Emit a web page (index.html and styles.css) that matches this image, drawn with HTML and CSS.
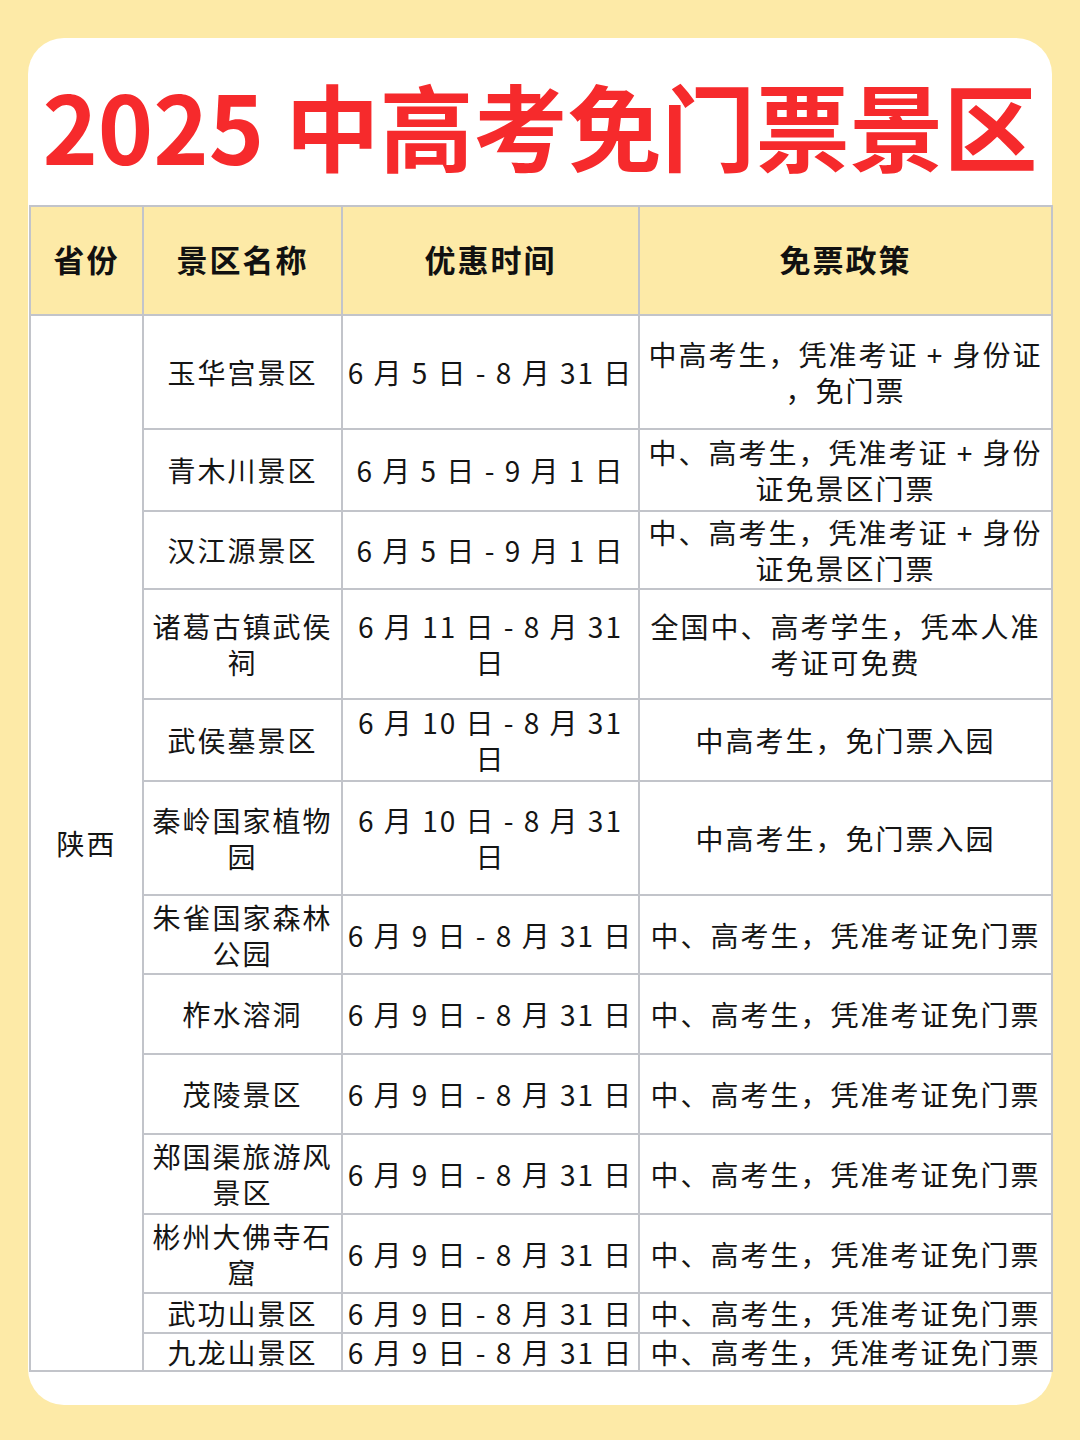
FILE: index.html
```html
<!DOCTYPE html>
<html lang="zh-CN">
<head>
<meta charset="utf-8">
<title>2025 中高考免门票景区</title>
<link rel="stylesheet" href="styles.css">
</head>
<body>
<div class="card">
  <h1 class="title">2025 中高考免门票景区</h1>
  <table class="tbl">
    <colgroup><col class="c1"><col class="c2"><col class="c3"><col class="c4"></colgroup>
    <thead>
      <tr class="r-head"><th>省份</th><th>景区名称</th><th>优惠时间</th><th>免票政策</th></tr>
    </thead>
    <tbody>
      <tr class="h114"><td rowspan="13" class="prov">陕西</td><td>玉华宫景区</td><td>6 月 5 日 - 8 月 31 日</td><td>中高考生，凭准考证 + 身份证<br>，免门票</td></tr>
      <tr class="h82"><td>青木川景区</td><td>6 月 5 日 - 9 月 1 日</td><td>中、高考生，凭准考证 + 身份<br>证免景区门票</td></tr>
      <tr class="h78"><td>汉江源景区</td><td>6 月 5 日 - 9 月 1 日</td><td>中、高考生，凭准考证 + 身份<br>证免景区门票</td></tr>
      <tr class="h110"><td>诸葛古镇武侯<br>祠</td><td>6 月 11 日 - 8 月 31<br>日</td><td>全国中、高考学生，凭本人准<br>考证可免费</td></tr>
      <tr class="h82"><td>武侯墓景区</td><td>6 月 10 日 - 8 月 31<br>日</td><td>中高考生，免门票入园</td></tr>
      <tr class="h114"><td>秦岭国家植物<br>园</td><td>6 月 10 日 - 8 月 31<br>日</td><td>中高考生，免门票入园</td></tr>
      <tr class="h79"><td>朱雀国家森林<br>公园</td><td>6 月 9 日 - 8 月 31 日</td><td>中、高考生，凭准考证免门票</td></tr>
      <tr class="h80"><td>柞水溶洞</td><td>6 月 9 日 - 8 月 31 日</td><td>中、高考生，凭准考证免门票</td></tr>
      <tr class="h80"><td>茂陵景区</td><td>6 月 9 日 - 8 月 31 日</td><td>中、高考生，凭准考证免门票</td></tr>
      <tr class="h80"><td>郑国渠旅游风<br>景区</td><td>6 月 9 日 - 8 月 31 日</td><td>中、高考生，凭准考证免门票</td></tr>
      <tr class="h79"><td>彬州大佛寺石<br>窟</td><td>6 月 9 日 - 8 月 31 日</td><td>中、高考生，凭准考证免门票</td></tr>
      <tr class="h40"><td>武功山景区</td><td>6 月 9 日 - 8 月 31 日</td><td>中、高考生，凭准考证免门票</td></tr>
      <tr class="h38"><td>九龙山景区</td><td>6 月 9 日 - 8 月 31 日</td><td>中、高考生，凭准考证免门票</td></tr>
    </tbody>
  </table>
</div>
</body>
</html>
```
FILE: styles.css
```css
html, body {
  margin: 0;
  padding: 0;
}
body {
  background: #fdeaa7;
  font-family: "Noto Sans CJK SC", "Noto Sans", sans-serif;
  color: #151515;
  padding-top: 38px;
  height: 1440px;
  box-sizing: border-box;
}
.card {
  width: 1024px;
  margin-left: 28px;
  background: #ffffff;
  border-radius: 36px;
  padding-bottom: 33px;
}
.title {
  margin: 0;
  height: 167px;
  box-sizing: border-box;
  padding-top: 4px;
  display: flex;
  align-items: center;
  justify-content: center;
  font-size: 94px;
  font-weight: 700;
  color: #f62a2c;
  letter-spacing: 0;
  line-height: 1;
  white-space: nowrap;
}
.tbl {
  width: 1022px;
  margin-left: 1px;
  border-collapse: collapse;
  table-layout: fixed;
}
.c1 { width: 113px; }
.c2 { width: 199px; }
.c3 { width: 297px; }
.c4 { width: 413px; }
.tbl th, .tbl td {
  border: 2px solid #c2c4ca;
  text-align: center;
  vertical-align: middle;
  padding: 0 4px;
  white-space: nowrap;
  overflow: visible;
}
.tbl th {
  background: #fdeaa7;
  font-size: 31px;
  font-weight: 700;
  letter-spacing: 2px;
  color: #111;
  padding-bottom: 5px;
}
.tbl td {
  font-size: 28px;
  font-weight: 400;
  letter-spacing: 2px;
  line-height: 36px;
}
.r-head { height: 109px; }
.h114 { height: 114px; }
.h110 { height: 110px; }
.h82 { height: 82px; }
.h80 { height: 80px; }
.h79 { height: 79px; }
.h78 { height: 78px; }
.h40 { height: 40px; }
.h38 { height: 38px; }
.prov {
  letter-spacing: 1px;
}
```
